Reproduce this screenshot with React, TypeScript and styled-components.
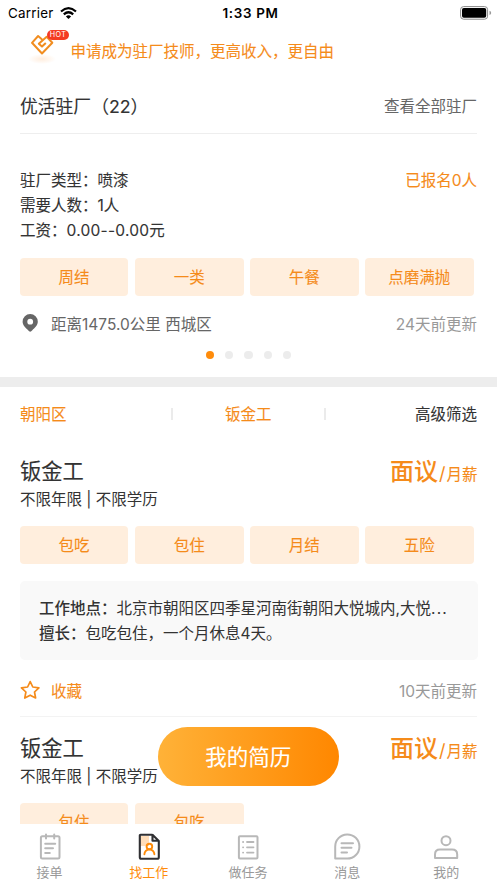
import React from 'react';
import styled, { createGlobalStyle, css } from 'styled-components';

const ORANGE = '#f58b1a';

// Slightly strengthened regular weight, between regular and medium.
const firm = css`
  font-weight: 400;
  -webkit-text-stroke: 0.1px currentColor;
`;

const GlobalStyle = createGlobalStyle`
  * { box-sizing: border-box; }
  body {
    margin: 0;
    background: #fff;
    font-family: Inter, "Noto Sans CJK SC", sans-serif;
    font-size: 15.5px;
    color: #333;
  }
`;

const Screen = styled.div`
  position: relative;
  display: flex;
  flex-direction: column;
  width: 497px;
  height: 883px;
  overflow: hidden;
  white-space: nowrap;
`;

const StatusBar = styled.header`
  display: grid;
  grid-template-columns: 1fr auto 1fr;
  align-items: center;
  height: 26px;
  flex: none;
  padding: 0 0 0 8px;
  color: #000;
  font-size: 13.4px;
`;

const Carrier = styled.div`
  display: flex;
  align-items: center;
  gap: 6px;
  letter-spacing: 0.25px;
`;

const Clock = styled.div`
  margin-right: 4px;
  font-weight: 600;
  letter-spacing: 0.68px;
`;

const BatterySlot = styled.div`
  display: flex;
  justify-content: flex-end;
`;

const Content = styled.main`
  flex: 1;
  min-height: 0;
  overflow: hidden;
`;

const Banner = styled.div`
  display: flex;
  align-items: center;
  height: 50px;
  padding-left: 28px;
  color: ${ORANGE};
`;

const BannerText = styled.span`
  ${firm}
  padding-bottom: 2px;
`;

const BannerIcon = styled.div`
  position: relative;
  width: 42.5px;
  height: 50px;
  svg { display: block; }
`;

const HotBadge = styled.span`
  position: absolute;
  left: 19px;
  top: 4px;
  width: 22px;
  height: 10px;
  border-radius: 5px;
  background: #f43b22;
  color: #fff;
  font-size: 7.2px;
  line-height: 10.5px;
  letter-spacing: 0.35px;
  text-align: center;
`;

const SectionHeader = styled.div`
  display: flex;
  align-items: center;
  justify-content: space-between;
  height: 58px;
  margin: 0 20px;
  border-bottom: 1px solid #eee;
`;

const SectionTitle = styled.h2`
  ${firm}
  margin: 0;
  font-size: 17.8px;
  color: #333;
`;

const MoreLink = styled.span`
  color: #666;
`;

const InfoBlock = styled.div`
  ${firm}
  display: flex;
  justify-content: space-between;
  padding: 34px 20px 0;
  height: 123.5px;
  line-height: 25px;
`;

const Accent = styled.span`
  color: ${ORANGE};
`;

const Wage = styled.span`
  letter-spacing: 0.25px;
`;

const Tags = styled.div`
  display: grid;
  grid-template-columns: repeat(4, 108.8px);
  column-gap: 6.3px;
  padding-left: 19.7px;
`;

const Tag = styled.div`
  ${firm}
  height: 38.5px;
  padding-top: 1px;
  border-radius: 4px;
  background: #ffeedd;
  color: ${ORANGE};
  line-height: 38.5px;
  text-align: center;
`;

const MetaRow = styled.div<{ $height: number }>`
  display: flex;
  align-items: center;
  height: ${(p) => p.$height}px;
  padding: 0 20px;
`;

const MetaIcon = styled.span`
  width: 31px;
  svg { display: block; }
`;

const Place = styled.span`
  color: #666;
`;

const Updated = styled.span`
  margin-left: auto;
  color: #999;
`;

const Dots = styled.div`
  display: flex;
  justify-content: center;
  gap: 11px;
  padding-top: 2px;
  height: 28px;
`;

const Dot = styled.i<{ $on?: boolean }>`
  width: 8.2px;
  height: 8.2px;
  border-radius: 50%;
  background: ${(p) => (p.$on ? '#ff8c0a' : '#ececec')};
`;

const Band = styled.div`
  height: 9.5px;
  background: #ededed;
`;

const Filters = styled.div`
  display: grid;
  grid-template-columns: 150.5px 2px 151.5px 2px 1fr;
  align-items: center;
  height: 54px;
  padding: 0 20px;
`;

const Filter = styled.span<{ $active?: boolean; $align: 'left' | 'center' | 'right' }>`
  ${firm}
  padding-bottom: 2px;
  color: ${(p) => (p.$active ? ORANGE : '#333')};
  text-align: ${(p) => p.$align};
`;

const FilterRule = styled.i`
  height: 12px;
  background: #ebebeb;
`;

const Job = styled.article`
  height: 277px;
`;

const JobHead = styled.div`
  display: flex;
  justify-content: space-between;
  align-items: center;
  height: 47px;
  padding: 14px 19.5px 0 20px;
  line-height: 30px;
`;

const JobTitle = styled.h3`
  ${firm}
  margin: 0;
  font-size: 21.3px;
`;

const Pay = styled.div`
  ${firm}
  padding-top: 5px;
  color: ${ORANGE};
  b { font-size: 24px; font-weight: 500; -webkit-text-stroke: 0; }
  i { font-style: normal; font-size: 18px; padding: 0 1px; -webkit-text-stroke: 0; }
`;

const Requirement = styled.div`
  height: 38px;
  padding: 0 20px;
  line-height: 23px;
`;

const Detail = styled.div`
  margin: 17px 19.5px 0;
  height: 78.5px;
  padding: 14.5px 19.5px;
  border-radius: 5px;
  background: #f9f9f9;
  line-height: 25px;
  p { margin: 0; overflow: hidden; }
  b { font-weight: 500; }
`;

const Ellipsis = styled.span`
  letter-spacing: 1.2px;
`;

const Favorite = styled.span`
  ${firm}
  color: ${ORANGE};
`;

const JobRule = styled.div`
  height: 1px;
  margin: -3.5px 20px 0;
  background: #f3f3f3;
`;

const ResumeButton = styled.button`
  position: absolute;
  left: 158px;
  top: 726.5px;
  width: 180.5px;
  height: 59px;
  padding: 0;
  border: 0;
  border-radius: 30px;
  background: linear-gradient(90deg, #ffb238, #ff8700);
  color: #fff;
  font: 400 21.5px/60px Inter, "Noto Sans CJK SC", sans-serif;
  -webkit-text-stroke: 0.1px #fff;
`;

const TabBar = styled.nav`
  display: grid;
  grid-template-columns: repeat(5, 99.2px);
  flex: none;
  height: 59px;
  background: #fff;
`;

const Tab = styled.div<{ $active?: boolean }>`
  display: flex;
  flex-direction: column;
  align-items: center;
  padding-top: 8px;
  color: ${(p) => (p.$active ? '#ff8c0a' : '#999')};
  font-size: 13px;
  line-height: 20px;
  svg { display: block; }
`;

const WifiIcon = () => (
  <svg width="17" height="13" viewBox="0 0 17 13" fill="none" stroke="#000" strokeWidth="2.2">
    <path d="M1 4.5Q8.5-2.2 16 4.5M3.8 7.4Q8.5 3.1 13.2 7.4" />
    <path d="M8.5 12L5.9 9.4Q8.5 7.2 11.1 9.4Z" fill="#000" stroke="none" />
  </svg>
);

const BatteryIcon = () => (
  <svg width="37.5" height="14" viewBox="0 0 37.5 14">
    <rect x="0.6" y="0.6" width="27" height="12.6" rx="3" fill="none" stroke="#888" />
    <rect x="2" y="2" width="24.2" height="9.8" rx="1.8" />
    <path d="M29.5 4.8Q31.2 5.3 31.2 6.9T29.5 9Z" fill="#999" />
  </svg>
);

const HeartIcon = () => (
  <svg width="30" height="50" viewBox="0 0 30 50" fill="none">
    <defs>
      <radialGradient id="glow">
        <stop offset="0" stopColor="#ffeddd" />
        <stop offset="1" stopColor="#ffeddd" stopOpacity="0" />
      </radialGradient>
    </defs>
    <ellipse cx="14" cy="33" rx="14" ry="5" fill="url(#glow)" />
    <path d="M14.1 13.4L10.1 10L4 16.8L14 27.5L24.3 16.8L18.7 10.7L10.8 17.8L14 20.6L17.8 17" stroke="#f18d20" strokeWidth="2" strokeLinejoin="round" />
  </svg>
);

const PinIcon = () => (
  <svg width="20" height="20" viewBox="0 0 20 20">
    <path fillRule="evenodd" d="M10.2 1.1A7.6 7.6 0 0 0 2.6 8.7C2.6 12.4 5.8 14.6 8.1 17.3Q10.2 20 12.3 17.3C14.6 14.6 17.8 12.4 17.8 8.7A7.6 7.6 0 0 0 10.2 1.1ZM10.2 5.8A2.9 2.9 0 1 1 10.2 11.6A2.9 2.9 0 1 1 10.2 5.8Z" fill="#666" />
  </svg>
);

const StarIcon = () => (
  <svg width="20" height="20" viewBox="0 0 20 20">
    <path d="M10.2 1.6L12.8 7L18.9 7.8L14.5 12L15.6 18L10.2 15.2L4.8 18L5.9 12L1.4 7.8L7.6 7Z" fill="none" stroke="#f58b1a" strokeWidth="1.7" strokeLinejoin="round" />
  </svg>
);

const gray = { fill: 'none', stroke: '#b8b8b8', strokeWidth: 2, strokeLinecap: 'round' as const, strokeLinejoin: 'round' as const };

const OrderIcon = () => (
  <svg width="28" height="30" viewBox="0 0 28 30" {...gray}>
    <rect x="4.9" y="4.3" width="18.6" height="22.2" rx="1.5" />
    <path d="M10 2.5V6.5M18.2 2.5V6.5M9.2 11.7H19.2M9.2 16.3H17M9.2 20.9H13.8" />
  </svg>
);

const WorkIcon = () => (
  <svg width="28" height="30" viewBox="0 0 28 30" fill="none">
    <path d="M5 4H14V14H5Z" fill="#ffddb9" />
    <path d="M17.5 2.8H5.6Q4.8 2.8 4.8 3.6V25.3Q4.8 26.8 6.2 26.8H22.1Q23.8 26.8 23.8 25.2V9L17.5 2.8V8.8H23.8" stroke="#303033" strokeWidth="2.1" strokeLinejoin="round" />
    <circle cx="14.4" cy="14.5" r="2.8" stroke="#ff8c0a" strokeWidth="1.9" />
    <path d="M9.4 22.2Q9.7 18 14.4 17.4Q19 18 19.4 22.2" stroke="#ff8c0a" strokeWidth="1.9" strokeLinecap="round" />
  </svg>
);

const TaskIcon = () => (
  <svg width="28" height="30" viewBox="0 0 28 30" {...gray}>
    <rect x="4.9" y="4.3" width="18.6" height="22.2" rx="1" />
    <path d="M13 10H19.5M13 15.3H19.5M13 20.6H19.5M9 10H9.2M9 15.3H9.2M9 20.6H9.2" strokeWidth="1.8" />
  </svg>
);

const MessageIcon = () => (
  <svg width="28" height="30" viewBox="0 0 28 30" {...gray}>
    <path d="M2.2 26.6V14.8A12.1 12.1 0 1 1 14.3 26.6Z" />
    <path d="M8.5 11.2H20M8.5 15.8H18.5M8.5 20.4H14" />
  </svg>
);

const ProfileIcon = () => (
  <svg width="28" height="30" viewBox="0 0 28 30" {...gray}>
    <circle cx="14" cy="8.7" r="4.5" />
    <path d="M3 26V22.5Q3 17.6 8 17.6H20Q25.2 17.6 25.2 22.5V26Z" />
  </svg>
);

const tabs = [
  { label: '接单', Icon: OrderIcon },
  { label: '找工作', Icon: WorkIcon, active: true },
  { label: '做任务', Icon: TaskIcon },
  { label: '消息', Icon: MessageIcon },
  { label: '我的', Icon: ProfileIcon },
];

function TagList({ items }: { items: string[] }) {
  return <Tags>{items.map((t) => <Tag key={t}>{t}</Tag>)}</Tags>;
}

function JobCard({ tags, full }: { tags: string[]; full?: boolean }) {
  return (
    <Job>
      <JobHead>
        <JobTitle>钣金工</JobTitle>
        <Pay><b>面议</b><i>/</i>月薪</Pay>
      </JobHead>
      <Requirement>不限年限 | 不限学历</Requirement>
      <TagList items={tags} />
      {full && (
        <>
          <Detail>
            <p><b>工作地点：</b>北京市朝阳区四季星河南街朝阳大悦城内,大悦<Ellipsis>...</Ellipsis></p>
            <p><b>擅长：</b>包吃包住，一个月休息4天。</p>
          </Detail>
          <MetaRow $height={60}>
            <MetaIcon><StarIcon /></MetaIcon>
            <Favorite>收藏</Favorite>
            <Updated>10天前更新</Updated>
          </MetaRow>
          <JobRule />
        </>
      )}
    </Job>
  );
}

export default function App() {
  return (
    <Screen>
      <GlobalStyle />
      <StatusBar>
        <Carrier>Carrier <WifiIcon /></Carrier>
        <Clock>1:33 PM</Clock>
        <BatterySlot><BatteryIcon /></BatterySlot>
      </StatusBar>
      <Content>
        <Banner>
          <BannerIcon><HeartIcon /><HotBadge>HOT</HotBadge></BannerIcon>
          <BannerText>申请成为驻厂技师，更高收入，更自由</BannerText>
        </Banner>
        <SectionHeader>
          <SectionTitle>优活驻厂（22）</SectionTitle>
          <MoreLink>查看全部驻厂</MoreLink>
        </SectionHeader>
        <InfoBlock>
          <div>
            <div>驻厂类型：喷漆</div>
            <div>需要人数：1人</div>
            <div>工资：<Wage>0.00--0.00元</Wage></div>
          </div>
          <Accent>已报名0人</Accent>
        </InfoBlock>
        <TagList items={['周结', '一类', '午餐', '点磨满抛']} />
        <MetaRow $height={53}>
          <MetaIcon><PinIcon /></MetaIcon>
          <Place>距离1475.0公里 西城区</Place>
          <Updated>24天前更新</Updated>
        </MetaRow>
        <Dots><Dot $on /><Dot /><Dot /><Dot /><Dot /></Dots>
        <Band />
        <Filters>
          <Filter $active $align="left">朝阳区</Filter>
          <FilterRule />
          <Filter $active $align="center">钣金工</Filter>
          <FilterRule />
          <Filter $align="right">高级筛选</Filter>
        </Filters>
        <JobCard full tags={['包吃', '包住', '月结', '五险']} />
        <JobCard tags={['包住', '包吃']} />
      </Content>
      <TabBar>
        {tabs.map(({ label, Icon, active }) => (
          <Tab key={label} $active={active}><Icon />{label}</Tab>
        ))}
      </TabBar>
      <ResumeButton>我的简历</ResumeButton>
    </Screen>
  );
}
